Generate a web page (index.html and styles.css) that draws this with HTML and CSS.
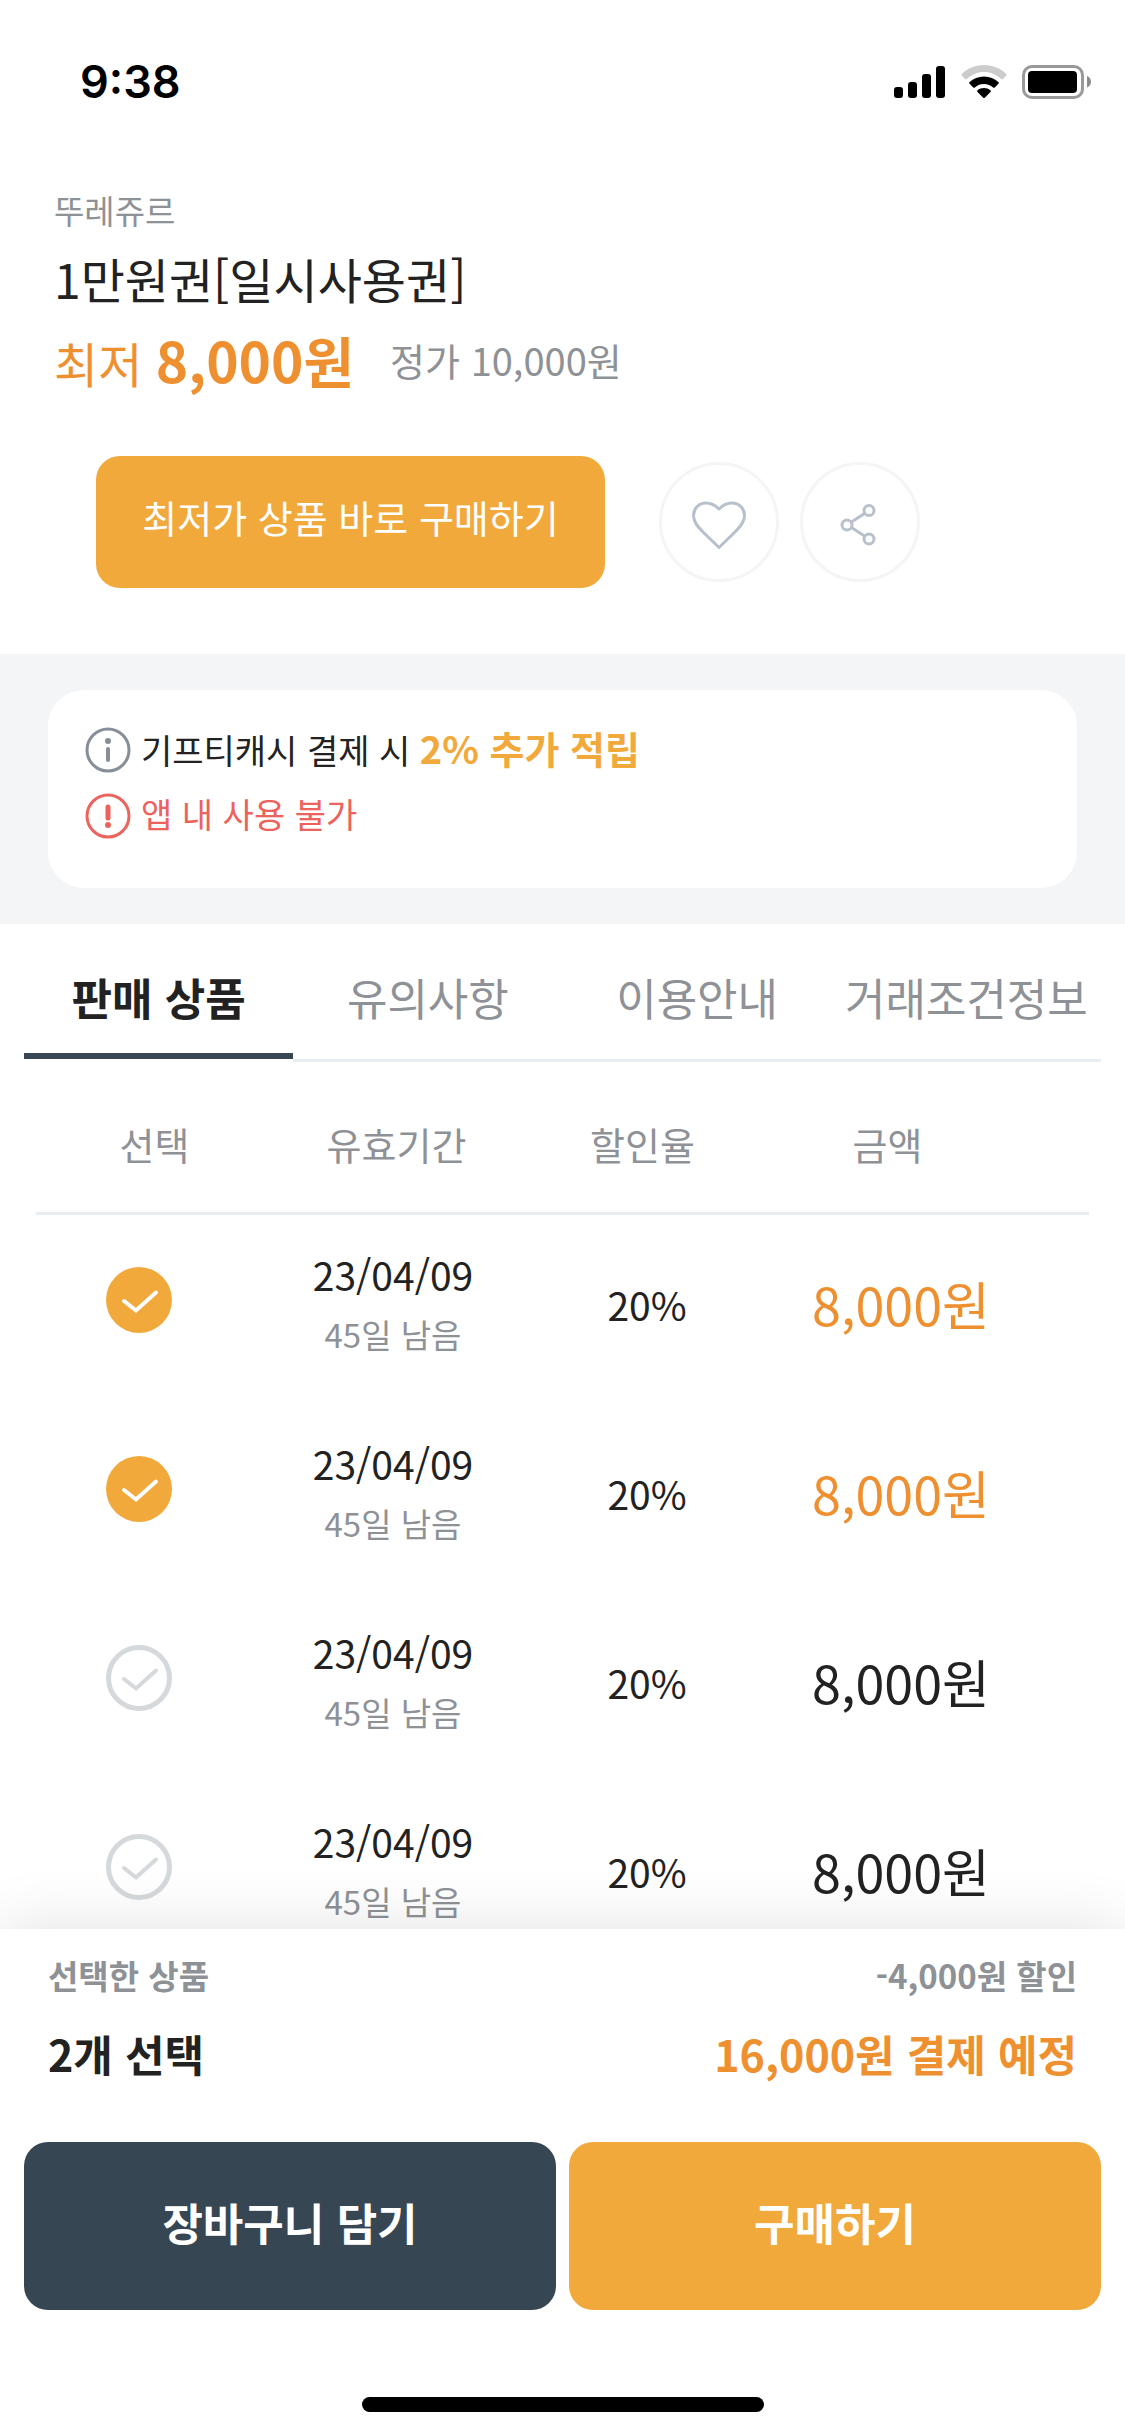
FILE: index.html
```html
<!DOCTYPE html>
<html lang="ko">
<head>
<meta charset="utf-8">
<meta name="viewport" content="width=device-width, initial-scale=1">
<title>1만원권[일시사용권]</title>
<link rel="stylesheet" href="styles.css">
</head>
<body>
<div class="app">
  <header class="status">
    <span class="status-time">9:38</span>
    <div class="status-icons">
      <svg width="52" height="34" viewBox="0 0 52 34" aria-hidden="true">
        <rect x="0" y="22" width="9" height="11" rx="3"/>
        <rect x="14" y="17" width="9" height="16" rx="3"/>
        <rect x="28" y="9" width="9" height="24" rx="3"/>
        <rect x="42" y="1" width="9" height="32" rx="3"/>
      </svg>
      <svg width="46" height="34" viewBox="0 0 46 34" aria-hidden="true">
        <path fill="#ccc" d="M23 0C14 0 6 3.500 .8 9c-.5.500-.5 1.200 0 1.700l3.400 3.400c.5.500 1.200.5 1.700 0C10.300 9.700 16.300 7 23 7s12.700 2.700 17.100 7.100c.5.500 1.200.5 1.700 0l3.400-3.400c.5-.5.500-1.200 0-1.700C40 3.500 32 0 23 0z"/>
        <path d="M23 11.500c-5.600 0-10.600 2.100-14.400 5.600-.5.500-.5 1.200 0 1.700l3.600 3.600c.5.500 1.200.5 1.700 0A13.500 13.500 0 0 1 23 19c3.500 0 6.700 1.300 9.100 3.400.5.500 1.200.5 1.700 0l3.600-3.600c.5-.5.500-1.200 0-1.700-3.800-3.500-8.800-5.600-14.400-5.600z"/>
        <path d="M23 23c-2.500 0-4.800.9-6.500 2.300-.5.500-.5 1.100 0 1.600l5.700 5.800c.5.500 1.100.5 1.600 0l5.700-5.800c.5-.5.500-1.100 0-1.600A10.200 10.200 0 0 0 23 23z"/>
      </svg>
      <svg width="70" height="34" viewBox="0 0 70 34" aria-hidden="true">
        <rect x="1.500" y="1.500" width="59" height="31" rx="8.500" fill="none" stroke="#999" stroke-width="3"/>
        <rect x="6" y="6" width="49" height="22" rx="4"/>
        <path d="M65 11c2.700 1.100 4 3.300 4 5.800s-1.300 4.700-4 5.800z" fill="#8c8c8c"/>
      </svg>
    </div>
  </header>

  <main class="content">
    <section class="product">
      <p class="brand">뚜레쥬르</p>
      <h1 class="title">1만원권[일시사용권]</h1>
      <div class="prices">
        <p class="lowest">최저 <strong>8,000원</strong></p>
        <p class="list-price">정가 10,000원</p>
      </div>
      <div class="actions">
        <button class="buy-lowest" type="button">최저가 상품 바로 구매하기</button>
        <button class="round" type="button" aria-label="찜하기">
          <svg width="54" height="48" viewBox="0 0 54 48" fill="none" stroke="#b8c0cc" stroke-width="3" stroke-linejoin="round" aria-hidden="true">
            <path d="M27 46.500 12 32C5 25 1.500 20.500 1.500 14.500 1.500 7.500 7 2 14 2c5 0 9.500 2.500 13 6 3.500-3.500 8-6 13-6 7 0 12.500 5.500 12.500 12.500C52.500 20.500 49 25 42 32z"/>
          </svg>
        </button>
        <button class="round" type="button" aria-label="공유하기">
          <svg width="44" height="44" viewBox="0 0 44 44" fill="none" stroke="#b8c0cc" stroke-width="3" aria-hidden="true">
            <circle cx="9" cy="22" r="5"/><circle cx="31" cy="7.500" r="5"/><circle cx="31" cy="36" r="5"/>
            <path d="M13.500 19 26.500 10.500M13.500 24.500l13 8.500"/>
          </svg>
        </button>
      </div>
    </section>

    <section class="notice">
      <div class="notice-card">
        <p class="notice-line">
          <svg width="46" height="46" viewBox="0 0 46 46" fill="none" stroke="#868f98" aria-hidden="true">
            <circle cx="23" cy="23" r="21" stroke-width="3"/><path d="M23 22v11" stroke-width="4" stroke-linecap="round"/><circle cx="23" cy="14" r="3" fill="#868f98" stroke="none"/>
          </svg>
          <span>기프티캐시 결제 시 <strong>2% 추가 적립</strong></span>
        </p>
        <p class="notice-line warn">
          <svg width="46" height="46" viewBox="0 0 46 46" fill="none" stroke="#ed625c" aria-hidden="true">
            <circle cx="23" cy="23" r="21" stroke-width="3"/><path d="M23 14v11" stroke-width="5" stroke-linecap="round"/><circle cx="23" cy="32" r="3" fill="#ed625c" stroke="none"/>
          </svg>
          <span>앱 내 사용 불가</span>
        </p>
      </div>
    </section>

    <nav class="tabs">
      <a class="tab active" href="#items" aria-current="page">판매 상품</a>
      <a class="tab" href="#caution">유의사항</a>
      <a class="tab" href="#guide">이용안내</a>
      <a class="tab" href="#terms">거래조건정보</a>
    </nav>

    <table class="items" id="items">
      <thead>
        <tr><th scope="col">선택</th><th scope="col">유효기간</th><th scope="col">할인율</th><th scope="col">금액</th></tr>
      </thead>
      <tbody>
        <tr>
          <td><label class="check"><input type="checkbox" checked aria-label="상품 1 선택"><svg viewBox="0 0 66 66" aria-hidden="true"><path d="M18 34l12 9.500 20-18"/></svg></label></td>
          <td><span class="date">23/04/09</span><span class="left">45일 남음</span></td>
          <td class="rate">20%</td>
          <td class="amount">8,000원</td>
        </tr>
        <tr>
          <td><label class="check"><input type="checkbox" checked aria-label="상품 2 선택"><svg viewBox="0 0 66 66" aria-hidden="true"><path d="M18 34l12 9.500 20-18"/></svg></label></td>
          <td><span class="date">23/04/09</span><span class="left">45일 남음</span></td>
          <td class="rate">20%</td>
          <td class="amount">8,000원</td>
        </tr>
        <tr>
          <td><label class="check"><input type="checkbox" aria-label="상품 3 선택"><svg viewBox="0 0 66 66" aria-hidden="true"><path d="M18 34l12 9.500 20-18"/></svg></label></td>
          <td><span class="date">23/04/09</span><span class="left">45일 남음</span></td>
          <td class="rate">20%</td>
          <td class="amount">8,000원</td>
        </tr>
        <tr>
          <td><label class="check"><input type="checkbox" aria-label="상품 4 선택"><svg viewBox="0 0 66 66" aria-hidden="true"><path d="M18 34l12 9.500 20-18"/></svg></label></td>
          <td><span class="date">23/04/09</span><span class="left">45일 남음</span></td>
          <td class="rate">20%</td>
          <td class="amount">8,000원</td>
        </tr>
      </tbody>
    </table>
  </main>

  <footer class="sheet">
    <div class="summary small"><span>선택한 상품</span><span>-4,000원 할인</span></div>
    <div class="summary large"><span>2개 선택</span><span class="total">16,000원 결제 예정</span></div>
    <div class="sheet-buttons">
      <button class="cart" type="button">장바구니 담기</button>
      <button class="buy" type="button">구매하기</button>
    </div>
    <div class="home-bar"></div>
  </footer>
</div>
</body>
</html>
```
FILE: styles.css
```css
* { box-sizing: border-box; margin: 0; padding: 0; }

body {
  background: #fff;
  color: #222;
  font-family: "Noto Sans CJK KR", sans-serif;
}

button { border: 0; background: none; font: inherit; cursor: pointer; }
svg { display: block; flex: none; }

.app { display: flex; flex-direction: column; height: 100vh; }

/* Status bar */
.status {
  display: flex;
  flex: none;
  align-items: center;
  justify-content: space-between;
  height: 164px;
  padding: 0 33px 0 80px;
}
.status-time { font: 600 45px/56px Inter, sans-serif; color: #000; }
.status-icons { display: flex; gap: 15px; }

/* Scrolling content */
.content { flex: 1; min-height: 0; overflow-y: auto; scrollbar-width: none; }

.product { padding: 22px 54px 66px; }
.brand { font-size: 33px; line-height: 48px; color: #8e9196; }
.title { margin-top: 12px; font-size: 48px; line-height: 64px; font-weight: 400; }
.prices { display: flex; align-items: center; gap: 36px; height: 64px; margin-top: 20px; }
.lowest { font-size: 48px; line-height: 64px; color: #ef9030; }
.lowest strong { font-size: 55px; line-height: 1; }
.list-price { padding-bottom: 4px; font-size: 38px; line-height: 56px; color: #8e9196; }

.actions { display: flex; align-items: center; gap: 21px; margin-top: 62px; padding-left: 42px; }
.buy-lowest {
  width: 509px;
  height: 132px;
  margin-right: 33px;
  padding-bottom: 12px;
  border-radius: 24px;
  background: #f2a93b;
  color: #fff;
  font-size: 38px;
}
.round {
  display: flex;
  align-items: center;
  justify-content: center;
  width: 120px;
  height: 120px;
  padding-top: 6px;
  border: 3px solid #f3f5f6;
  border-radius: 50%;
}

.notice { padding: 36px 48px; background: #f4f5f7; }
.notice-card {
  display: flex;
  flex-direction: column;
  gap: 20px;
  padding: 37px 37px 49px;
  border-radius: 36px;
  background: #fff;
}
.notice-line { display: flex; align-items: center; gap: 10px; height: 46px; font-size: 34px; line-height: 46px; }
.notice-line strong { color: #f2a93b; font-size: 38px; line-height: 1; }
.warn { color: #ed625c; }
.warn span { padding-bottom: 4px; }

/* Tabs */
.tabs { display: grid; grid-template-columns: repeat(4, 1fr); padding: 0 24px; }
.tab {
  height: 138px;
  border-bottom: 3px solid #e7edf0;
  color: #8e9196;
  font-size: 44px;
  line-height: 146px;
  text-align: center;
  text-decoration: none;
  white-space: nowrap;
}
.tab.active { height: 135px; border-bottom: 6px solid #374653; color: #222; font-weight: 700; }

/* Items */
.items { display: block; margin: 0 36px; }
.items thead, .items tbody { display: block; }
.items tr { display: grid; align-items: center; }
.items thead tr {
  grid-template-columns: 237fr 247fr 245fr 245fr 79fr;
  height: 153px;
  border-bottom: 3px solid #e7edf0;
}
.items tbody tr { grid-template-columns: 230fr 254fr 254fr 254fr 61fr; height: 189px; padding-bottom: 12px; }
.items th { padding-top: 14px; color: #8e9196; font-size: 38px; line-height: 56px; font-weight: 400; }
.items td { text-align: center; line-height: 56px; }

.check { display: grid; width: 66px; margin-left: 70px; padding-bottom: 8px; }
.check input, .check svg { grid-area: 1 / 1; width: 66px; height: 66px; }
.check input { appearance: none; border: 5px solid #d5d9dc; border-radius: 50%; }
.check input:checked { border: 0; background: #f2a93b; }
.check svg { z-index: 1; pointer-events: none; fill: none; stroke: #d5d9dc; stroke-width: 4; stroke-linecap: round; }
.check input:checked + svg { stroke: #fff; }

.date, .left { display: block; }
.date, .rate { font-size: 39px; }
.left { margin-top: 4px; color: #8e9196; font-size: 33px; }
.amount { font-size: 52px; }
tr:has(input:checked) .amount { color: #ef9030; }

/* Bottom sheet */
.sheet {
  z-index: 1;
  flex: none;
  padding: 22px 24px 24px;
  background: #fff;
  box-shadow: 0 0 60px rgba(0, 0, 0, .12);
}
.summary { display: flex; justify-content: space-between; padding: 0 24px; font-weight: 700; }
.small { color: #8e9196; font-size: 33px; line-height: 48px; }
.large { margin-top: 22px; font-size: 43px; line-height: 64px; }
.total { color: #ef9030; }
.sheet-buttons { display: grid; grid-template-columns: 1fr 1fr; gap: 13px; margin-top: 57px; }
.cart, .buy { height: 168px; padding-bottom: 8px; border-radius: 24px; color: #fff; font-size: 44px; font-weight: 700; }
.cart { background: #374653; }
.buy { background: #f2a93b; }
.home-bar { width: 402px; height: 15px; margin: 87px auto 0; border-radius: 8px; background: #000; }
```
